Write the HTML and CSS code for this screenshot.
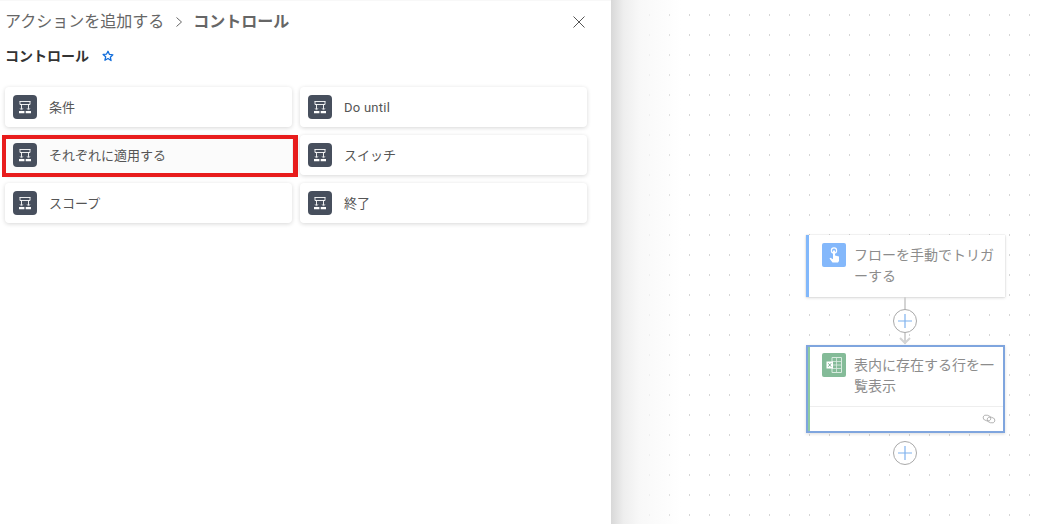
FILE: index.html
```html
<!DOCTYPE html>
<html lang="ja">
<head>
  <meta charset="UTF-8">
  <title>コントロール</title>
  <link rel="stylesheet" href="styles.css">
</head>
<body>
  <svg class="defs" width="0" height="0">
    <symbol id="ctrl" viewBox="0 0 24 24">
      <path d="M6.5 6.5h11M7 9.5h10M7 6.5v3M17 6.5v3M8.5 9.5v4.5M15.5 9.5v4.5" fill="none" stroke="#fff" stroke-width=".9"/>
      <path d="M6 16h5.4v2.2H6zM12.7 16H18v2.2h-5.3z" fill="#fff"/>
      <path d="M7 13.2l1.5 1.9 1.5-1.9M14 13.2l1.5 1.9 1.5-1.9" fill="none" stroke="#fff" stroke-width=".7"/>
    </symbol>
  </svg>

  <div class="page">
    <div class="panel">
      <div class="crumbs">
        <span>アクションを追加する</span>
        <svg class="chevron" width="8" height="12" viewBox="0 0 8 12"><path d="M1.5 1.5L6.5 6l-5 4.5" fill="none" stroke="#666" stroke-width="1"/></svg>
        <b>コントロール</b>
        <svg class="close" width="12" height="12" viewBox="0 0 12 12"><path d="M.5.5l11 11M11.5.5l-11 11" stroke="#555" stroke-width="1" fill="none"/></svg>
      </div>
      <div class="section-title">
        <b>コントロール</b>
        <svg width="12" height="12" viewBox="0 0 24 24"><path d="M12 2.5l2.9 6.3 6.9.8-5.1 4.7 1.4 6.8L12 16.9l-6.1 3.5 1.4-6.8-5.1-4.7 6.9-.8z" fill="none" stroke="#0f6cdb" stroke-width="2.6" stroke-linejoin="round"/></svg>
      </div>
      <div class="grid">
        <div class="card"><svg class="icon"><use href="#ctrl"/></svg><span>条件</span></div>
        <div class="card"><svg class="icon"><use href="#ctrl"/></svg><span class="latin">Do until</span></div>
        <div class="card card-hover"><svg class="icon"><use href="#ctrl"/></svg><span>それぞれに適用する</span><div class="mark"></div></div>
        <div class="card"><svg class="icon"><use href="#ctrl"/></svg><span>スイッチ</span></div>
        <div class="card"><svg class="icon"><use href="#ctrl"/></svg><span>スコープ</span></div>
        <div class="card"><svg class="icon"><use href="#ctrl"/></svg><span>終了</span></div>
      </div>
    </div>

    <div class="canvas">
      <div class="shade"></div>

      <div class="node node-trigger">
        <div class="node-head">
          <div class="node-icon blue">
            <svg width="24" height="24" viewBox="0 0 24 24">
              <circle cx="12" cy="7.5" r="2.6" fill="none" stroke="#fff" stroke-width="1.2"/>
              <path d="M11 7.5h2v5l4 1v4.5l-1 1.5h-5.5l-3-4 1-.7 2.5 1.5z" fill="#fff"/>
            </svg>
          </div>
          <div class="node-text">フローを手動でトリガーする</div>
        </div>
      </div>

      <div class="edge edge-1"></div>
      <svg class="arrow" width="12" height="8" viewBox="0 0 12 8"><path d="M1 1l5 5 5-5" fill="none" stroke="#d4d4d4" stroke-width="2"/></svg>
      <div class="add add-1"><svg width="14" height="14" viewBox="0 0 14 14"><path d="M7 0v14M0 7h14" stroke="#7fb2ee" stroke-width="1.2"/></svg></div>

      <div class="node node-excel">
        <div class="node-head">
          <div class="node-icon green">
            <svg width="24" height="24" viewBox="0 0 24 24">
              <path d="M10 4.5h9.5v15H10z" fill="none" stroke="#d9ebe0" stroke-width="1"/>
              <path d="M14.5 4.5v15M10 8.5h9.5M10 12h9.5M10 15.5h9.5" stroke="#d9ebe0" stroke-width=".8"/>
              <rect x="4.5" y="8.5" width="6.5" height="7" fill="#fff"/>
              <path d="M6.3 10.3l2.9 3.4M9.2 10.3l-2.9 3.4" stroke="#6aa884" stroke-width=".9"/>
            </svg>
          </div>
          <div class="node-text">表内に存在する行を一覧表示</div>
        </div>
        <div class="node-foot">
          <svg width="14" height="10" viewBox="0 0 14 10"><ellipse cx="5" cy="4" rx="4" ry="2.8" fill="none" stroke="#aaa" stroke-width=".8" transform="rotate(15 5 4)"/><ellipse cx="9" cy="6" rx="4" ry="2.8" fill="none" stroke="#aaa" stroke-width=".8" transform="rotate(15 9 6)"/></svg>
        </div>
      </div>

      <div class="add add-2"><svg width="14" height="14" viewBox="0 0 14 14"><path d="M7 0v14M0 7h14" stroke="#7fb2ee" stroke-width="1.2"/></svg></div>
    </div>
  </div>
</body>
</html>
```

FILE: styles.css
```css
* {
  box-sizing: border-box;
}
html, body {
  margin: 0;
  height: 100%;
  overflow: hidden;
}
body {
  font-family: Roboto, "Noto Sans CJK JP", sans-serif;
  color: #333;
  background: #fff;
}
.defs {
  position: absolute;
}
.page {
  display: flex;
  height: 524px;
}

/* left panel */
.panel {
  width: 611px;
  flex: none;
  background: #fff;
  padding: 10px 5px 0;
  border-top: 1px solid #f8f8f8;
}
.crumbs {
  display: flex;
  align-items: center;
  height: 22px;
  font-size: 16px;
  line-height: 22px;
  color: #666;
}
.chevron {
  margin: 0 10px 0 11px;
}
.crumbs b {
  color: #666;
}
.close {
  margin-left: auto;
  margin-right: 21px;
}
.section-title {
  display: flex;
  align-items: center;
  gap: 13px;
  height: 20px;
  margin-top: 13px;
  font-size: 14px;
  line-height: 20px;
  color: #333;
}
.grid {
  display: grid;
  grid-template-columns: 287px 287px;
  grid-auto-rows: 40px;
  gap: 8px;
  margin-top: 21px;
}
.card {
  position: relative;
  display: flex;
  align-items: center;
  padding-left: 8px;
  gap: 12px;
  background: #fff;
  border-radius: 4px;
  font-size: 13px;
  color: #555;
  box-shadow: 0 1px 4px rgba(0, 0, 0, 0.16);
}
.card span {
  padding-bottom: 2px;
}
.card .latin {
  padding-bottom: 0;
  letter-spacing: 0.25px;
}
.card-hover {
  background: #fbfbfb;
}
.icon {
  width: 24px;
  height: 24px;
  flex: none;
  background: #474f5d;
  border-radius: 4px;
}
.mark {
  position: absolute;
  left: -3px;
  top: 0;
  width: 296px;
  height: 42px;
  border: 4px solid #e81c1c;
  border-right-width: 5px;
}

/* flow canvas */
.canvas {
  position: relative;
  flex: 1;
  background-color: #fff;
  background-image: radial-gradient(circle at 0.5px 1px, #d6d6d6 0.9px, transparent 1px);
  background-size: 20px 20px;
  background-position: 18px 14px;
}
.shade {
  position: absolute;
  left: 0;
  top: 0;
  bottom: 0;
  width: 70px;
  background: linear-gradient(to right, #d8d8d8, #eeeeee 18%, #f8f8f8 40%, rgba(255, 255, 255, 0));
}
.node {
  position: absolute;
  left: 195px;
  width: 199px;
  background: #fff;
  color: #8c8c8c;
  font-size: 14px;
  line-height: 21px;
  box-shadow: 0 1px 3px rgba(0, 0, 0, 0.14), 0 0 1px rgba(0, 0, 0, 0.2);
}
.node-trigger {
  top: 235px;
  height: 62px;
  border-left: 3px solid #82b8fb;
}
.node-excel {
  top: 345px;
  height: 88px;
  border: 2px solid #7fa5de;
  box-shadow: inset 2px 0 0 #8fcba3, 0 1px 3px rgba(0, 0, 0, 0.14);
  display: flex;
  flex-direction: column;
}
.node-head {
  display: flex;
  gap: 8px;
  padding: 8px 8px 0 13px;
}
.node-excel .node-head {
  padding: 6px 8px 0 14px;
  flex: 1;
}
.node-text {
  width: 144px;
  padding-top: 2px;
}
.node-icon {
  width: 24px;
  height: 24px;
  flex: none;
  border-radius: 2px;
  display: flex;
}
.blue {
  background: #84b8fb;
}
.green {
  background: #84bb98;
}
.node-foot {
  height: 25px;
  margin-left: 2px;
  border-top: 1px solid #eee;
  display: flex;
  justify-content: flex-end;
  align-items: center;
  padding: 0 7px;
}
.edge {
  position: absolute;
  left: 293px;
  width: 2px;
  background: #d4d4d4;
}
.edge-1 {
  top: 297px;
  height: 47px;
}
.arrow {
  position: absolute;
  left: 288px;
  top: 337px;
}
.add {
  position: absolute;
  left: 282px;
  width: 24px;
  height: 24px;
  border: 1px solid #a9a9a9;
  border-radius: 50%;
  background: #fff;
  display: flex;
  align-items: center;
  justify-content: center;
}
.add-1 {
  top: 309px;
}
.add-2 {
  top: 441px;
}
```
